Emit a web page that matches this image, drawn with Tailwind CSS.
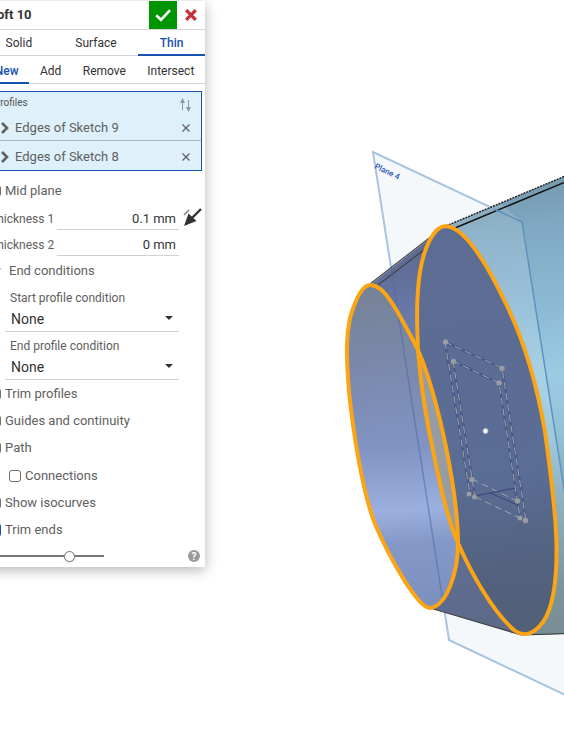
<!DOCTYPE html>
<html lang="en">

<head>
    <meta charset="UTF-8">
    <meta name="viewport" content="width=device-width, initial-scale=1.0">
    <title>Loft 10</title>
    <script src="https://cdn.jsdelivr.net/npm/@tailwindcss/browser@4"></script>
</head>

<body class="flex h-screen items-start overflow-hidden bg-white font-[Roboto,sans-serif] text-[13px] text-[#606060]">
    <!-- Loft dialog, docked partly past the left edge -->
    <form class="z-10 mt-px -ml-4 w-[221px] shrink-0 bg-white shadow-[0_3px_12px_rgba(0,0,0,0.3)]">
        <header class="flex h-7 items-center pl-[6px]">
            <h1 class="flex-1 text-[13px] font-bold text-[#333]">Loft 10</h1>
            <button type="button" aria-label="Accept" class="flex size-7 items-center justify-center bg-[#009400]">
                <svg class="size-4" viewBox="0 0 16 16" fill="none" stroke="#fff" stroke-width="2.6"><path d="M1.2 8.2 6 12.8 15 3.2" /></svg>
            </button>
            <button type="button" aria-label="Cancel" class="flex size-7 items-center justify-center">
                <svg class="size-3" viewBox="0 0 12 12" fill="none" stroke="#c4303a" stroke-width="3.2"><path d="M1.2 1.2 10.8 10.8M10.8 1.2 1.2 10.8" /></svg>
            </button>
        </header>

        <div class="flex h-[27px] border-y border-[#d5d5d5] text-xs text-[#333]">
            <button type="button" class="flex-auto">Solid</button>
            <button type="button" class="flex-auto">Surface</button>
            <button type="button" class="-mb-px flex-auto border-b-2 border-[#1651b0] pt-px font-medium text-[#1651b0]">Thin</button>
        </div>
        <div class="flex h-7 border-b border-[#d5d5d5] text-xs text-[#333]">
            <button type="button" class="-mb-px flex-auto border-b-2 border-[#1651b0] pt-[3px] font-medium text-[#1651b0]">New</button>
            <button type="button" class="flex-auto pt-[2px]">Add</button>
            <button type="button" class="flex-auto pt-[2px]">Remove</button>
            <button type="button" class="flex-auto pt-[2px]">Intersect</button>
        </div>

        <section class="mx-[3px] mt-[7px] border border-[#1651b0] bg-[#def0fa]">
            <div class="flex h-[21px] items-center justify-between pr-[10px] pl-[6px]">
                <h2 class="text-[10px] text-[#555]">Profiles</h2>
                <svg class="mt-1 h-[14px] w-[11px]" viewBox="0 0 11 14" fill="#8a979e" stroke="#8a979e"><path d="M2.5 12V3M8.5 2v8" /><path stroke="none" d="M0 5 2.5 0 5 5zM6 9h5l-2.5 5z" /></svg>
            </div>
            <ul>
                <li class="flex h-7 items-center border-b border-[#a8bac4] pt-[2px] pr-[11px] pl-[13px]">
                    <svg class="h-3 w-2" viewBox="0 0 8 12" fill="none" stroke="#606060" stroke-width="2.6"><path d="M1 1 6 6 1 11" /></svg>
                    <span class="flex-1 pl-[6px]">Edges of Sketch 9</span>
                    <button type="button" aria-label="Remove Edges of Sketch 9"><svg class="size-2" viewBox="0 0 8 8" fill="none" stroke="#606060" stroke-width="1.2"><path d="M.5.5 7.5 7.5M7.5.5.5 7.5" /></svg></button>
                </li>
                <li class="flex h-[29px] items-center pt-[2px] pr-[11px] pl-[13px]">
                    <svg class="h-3 w-2" viewBox="0 0 8 12" fill="none" stroke="#606060" stroke-width="2.6"><path d="M1 1 6 6 1 11" /></svg>
                    <span class="flex-1 pl-[6px]">Edges of Sketch 8</span>
                    <button type="button" aria-label="Remove Edges of Sketch 8"><svg class="size-2" viewBox="0 0 8 8" fill="none" stroke="#606060" stroke-width="1.2"><path d="M.5.5 7.5 7.5M7.5.5.5 7.5" /></svg></button>
                </li>
            </ul>
        </section>

        <label class="mt-[6px] mb-px flex h-7 items-center gap-1 pl-[5px]">
            <input type="checkbox" class="size-3 appearance-none rounded-[3px] border border-[#707070]">Mid plane
        </label>

        <div class="flex h-[26px] items-center pl-[6px]">
            <label for="thickness1" class="text-xs">Thickness 1</label>
            <input id="thickness1" type="text" value="0.1 mm" class="ml-[3px] h-[22px] min-w-0 flex-1 border-b border-[#d0d0d0] pr-[3px] text-right text-[#333]">
            <button type="button" aria-label="Opposite direction" class="mr-[3px] ml-1">
                <svg class="mb-1 size-[19px]" viewBox="0 0 19 19"><path d="M1 7 6 2" stroke="#999" stroke-width="1.8" /><path d="M18 1 9 10" stroke="#333" stroke-width="2.4" /><path fill="#333" d="M1 18 5.5 5.5 13.5 13z" /></svg>
            </button>
        </div>
        <div class="flex h-[26px] items-center pr-[26px] pl-[6px]">
            <label for="thickness2" class="text-xs">Thickness 2</label>
            <input id="thickness2" type="text" value="0 mm" class="ml-[3px] h-[22px] min-w-0 flex-1 border-b border-[#d0d0d0] pr-[3px] text-right text-[#333]">
        </div>

        <button type="button" class="flex h-[26px] items-center gap-2 pl-[6px]">
            <svg class="h-2 w-[11px]" viewBox="0 0 11 8" fill="none" stroke="#606060" stroke-width="2.2"><path d="M1 1 5.5 6 10 1" /></svg>
            End conditions
        </button>

        <div class="mr-[26px] ml-[21px]">
            <div class="h-12 border-b border-[#d0d0d0] pt-1">
                <label for="start-condition" class="block pl-[5px] text-xs leading-5">Start profile condition</label>
                <div class="relative">
                    <select id="start-condition" class="h-[22px] w-full appearance-none pl-[6px] text-sm text-[#333]">
                        <option>None</option>
                    </select>
                    <svg class="pointer-events-none absolute top-[8px] right-[6px] h-1 w-2" viewBox="0 0 8 4" fill="#333"><path d="M0 0h8L4 4z" /></svg>
                </div>
            </div>
            <div class="h-12 border-b border-[#d0d0d0] pt-1">
                <label for="end-condition" class="block pl-[5px] text-xs leading-5">End profile condition</label>
                <div class="relative">
                    <select id="end-condition" class="h-[22px] w-full appearance-none pl-[6px] text-sm text-[#333]">
                        <option>None</option>
                    </select>
                    <svg class="pointer-events-none absolute top-[8px] right-[6px] h-1 w-2" viewBox="0 0 8 4" fill="#333"><path d="M0 0h8L4 4z" /></svg>
                </div>
            </div>
        </div>

        <label class="flex h-[27px] items-center gap-1 pl-[5px]">
            <input type="checkbox" class="size-3 appearance-none rounded-[3px] border border-[#707070]">Trim profiles
        </label>
        <label class="flex h-[27px] items-center gap-1 pl-[5px]">
            <input type="checkbox" class="size-3 appearance-none rounded-[3px] border border-[#707070]">Guides and continuity
        </label>
        <label class="flex h-7 items-center gap-1 pl-[5px]">
            <input type="checkbox" class="size-3 appearance-none rounded-[3px] border border-[#707070]">Path
        </label>
        <label class="flex h-[27px] items-center gap-1 pl-[25px]">
            <input type="checkbox" class="size-3 appearance-none rounded-[3px] border border-[#707070]">Connections
        </label>
        <label class="flex h-[27px] items-center gap-1 pl-[5px]">
            <input type="checkbox" class="size-3 appearance-none rounded-[3px] border border-[#707070]">Show isocurves
        </label>
        <label class="flex h-7 items-center gap-1 pl-[5px]">
            <input type="checkbox" checked class="size-3 appearance-none rounded-[2px] bg-[#1651b0]">Trim ends
        </label>

        <footer class="flex h-[23px] items-center justify-between pt-px pr-[5px] pl-[6px]">
            <input type="range" aria-label="Preview opacity" value="72" class="h-[2px] w-[114px] appearance-none bg-[#777] [&::-webkit-slider-thumb]:size-[11px] [&::-webkit-slider-thumb]:appearance-none [&::-webkit-slider-thumb]:rounded-full [&::-webkit-slider-thumb]:border [&::-webkit-slider-thumb]:border-[#777] [&::-webkit-slider-thumb]:bg-white [&::-webkit-slider-thumb]:shadow-sm">
            <button type="button" aria-label="Help" class="flex size-3 items-center justify-center rounded-full bg-[#999] text-[10px] font-bold text-white">?</button>
        </footer>
    </form>

    <!-- Model view -->
    <svg class="h-full min-w-0 flex-1" viewBox="205 0 359 732" preserveAspectRatio="xMinYMin slice" fill="none">
        <defs>
            <linearGradient id="tube" gradientUnits="userSpaceOnUse" x1="500" y1="190" x2="564" y2="640">
                <stop offset="0" stop-color="#769bb1" />
                <stop offset=".1" stop-color="#80aac4" />
                <stop offset=".25" stop-color="#8ab8d2" />
                <stop offset=".42" stop-color="#9ccbe4" />
                <stop offset=".55" stop-color="#93c1d6" />
                <stop offset=".72" stop-color="#7ba2b1" />
                <stop offset=".88" stop-color="#698690" />
                <stop offset="1" stop-color="#657a82" />
            </linearGradient>
            <linearGradient id="bore" gradientUnits="userSpaceOnUse" x1="380" y1="285" x2="400" y2="608">
                <stop offset="0" stop-color="#768296" />
                <stop offset=".25" stop-color="#7a89ab" />
                <stop offset=".5" stop-color="#8093c3" />
                <stop offset=".7" stop-color="#9bb0df" />
                <stop offset=".8" stop-color="#8499c8" />
                <stop offset="1" stop-color="#7c90be" />
            </linearGradient>
            <linearGradient id="skin" gradientUnits="userSpaceOnUse" x1="400" y1="250" x2="460" y2="620">
                <stop offset="0" stop-color="#5e6990" />
                <stop offset=".2" stop-color="#6a7bad" />
                <stop offset="1" stop-color="#5d6a8a" />
            </linearGradient>
            <linearGradient id="cap" gradientUnits="userSpaceOnUse" x1="470" y1="230" x2="520" y2="635">
                <stop offset="0" stop-color="#5d6c93" />
                <stop offset=".6" stop-color="#5a6d95" />
                <stop offset=".85" stop-color="#52617d" />
                <stop offset="1" stop-color="#515f78" />
            </linearGradient>
        </defs>

        <path fill="#f4f8fb" d="M373 152 522 222 580 592V702L449 640Z" />
        <path stroke="#a9c3e0" stroke-width="2" d="M580 702 449 640 373 152 522 222" />

        <path fill="url(#tube)" d="M446 226 570 174V634L521 635Z" />
        <path fill="#fff" fill-opacity=".13" d="M446 226 501 204 522 222 574 552V634H521Z" />
        <path stroke="#222" stroke-width="1.5" stroke-dasharray="2 1" d="M446 226 570 174" />
        <path stroke="#111" stroke-width="1.5" d="M455 228 570 180" />
        <path stroke="#5e92be" stroke-width="1.5" d="M494 209 522 222 574 552" />
        <path stroke="#333" d="M521 635 570 633.5" />

        <path fill="url(#skin)" d="M370 285 446 226 521 635 430 608Z" />
        <path stroke="#444" stroke-width="1.2" d="M370 284 446 225M378 285 450 230M430 608 521 635" />

        <path fill="url(#cap)" d="M446 226C434 226 424 247 420 272C416 298 417 325 418 350C421 386 426 420 434 455C440 484 447 518 458 543C471 573 493 612 514 630C525 638 534 634 543 622C553 608 557 580 556.5 545C556 515 551 475 545 432C537 385 525 343 507 306C491 272 467 228 446 226Z" />
        <path fill="url(#bore)" d="M370 285C380 285 388 296 397 311C405 325 412 338 418 350C421 386 426 420 434 455C440 484 447 518 458 543C458 572 447 606 430 608C418 608 390 559 375 524C362 491 353 430 349 392C346 352 346 337 350 318C355 301 362 285 370 285Z" />
        <path fill="#969ca3" d="M418 350C421 386 426 420 434 455C440 484 447 518 458 543C458 510 450 460 438 412C432 388 425 366 418 350Z" />
        <path stroke="#4d6aa5" stroke-opacity=".55" stroke-width="1.5" d="M391 268 444.5 612" />

        <!-- Construction sketch on the cap -->
        <g stroke="#4b5b89" stroke-width="2.5">
            <path d="M445 342 502 368 526 521M453 361 499 383 520 518M445 342 470 494M453 361 475 497" />
        </g>
        <g stroke="#a0a3a6" stroke-dasharray="7 4">
            <path d="M445 342 502 368 526 521M453 361 499 383 520 518M445 342 470 494M453 361 475 497M472 479 517 501M475 497 520 518" />
        </g>
        <path stroke="#344878" d="M475 496 515 488M490 493 518 505" />
        <g fill="#999da2">
            <circle cx="445.5" cy="342" r="2.7" /><circle cx="453.5" cy="361.5" r="2.7" />
            <circle cx="502" cy="368.5" r="2.7" /><circle cx="499" cy="383" r="2.7" />
            <circle cx="472" cy="479.5" r="2.7" /><circle cx="469" cy="494" r="2.5" />
            <circle cx="474.5" cy="497" r="2.5" /><circle cx="517.5" cy="501" r="2.7" />
            <circle cx="520" cy="518" r="2.5" /><circle cx="525.5" cy="520.5" r="2.7" />
        </g>
        <circle cx="485.5" cy="431" r="2.5" fill="#fff" stroke="#b0b4ba" />

        <!-- Selected profile edges -->
        <g stroke="#fba414" stroke-width="4" stroke-linejoin="round">
            <path d="M446 226C434 226 424 247 420 272C416 298 417 325 418 350C421 386 426 420 434 455C440 484 447 518 458 543C471 573 493 612 514 630C525 638 534 634 543 622C553 608 557 580 556.5 545C556 515 551 475 545 432C537 385 525 343 507 306C491 272 467 228 446 226Z" />
            <path d="M370 285C380 285 388 296 397 311C405 325 412 338 418 350C425 366 432 388 438 412C450 460 458 510 458 543C458 572 447 606 430 608C418 608 390 559 375 524C362 491 353 430 349 392C346 352 346 337 350 318C355 301 362 285 370 285Z" />
        </g>
        <text transform="translate(374 168) rotate(26)" fill="#2f5ab0" font-size="8" font-weight="500" font-family="Roboto, sans-serif">Plane 4</text>
    </svg>
</body>

</html>
